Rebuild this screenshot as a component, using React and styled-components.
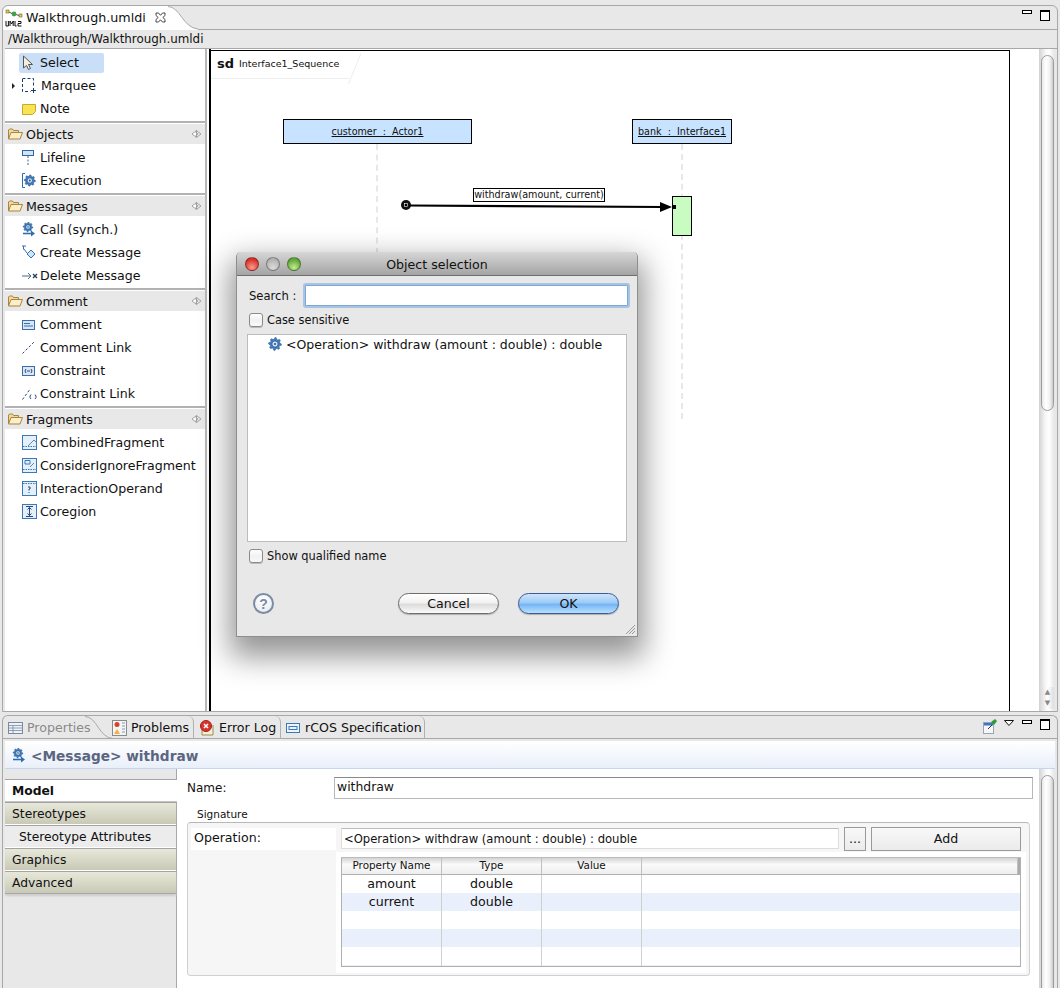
import React from "react";
import styled, { createGlobalStyle } from "styled-components";

const Global = createGlobalStyle`
  html, body { margin: 0; padding: 0; background: #e8e8e8; }
  body { font-family: "DejaVu Sans", "Liberation Sans", sans-serif; color: #111; }
  * { box-sizing: border-box; }
`;

const Page = styled.div`
  position: relative; width: 1060px; height: 988px; overflow: hidden;
  background: #e8e8e8; display: flex; flex-direction: column; padding: 5px 2px 0;
  font-size: 12.6px;
`;
const EditorPane = styled.section`
  height: 707px; border: 1px solid #a8a8a8; border-top-left-radius: 6px; border-top-right-radius: 6px;
  background: #e8e8e8; display: flex; flex-direction: column;
`;
const TabStrip = styled.div`
  height: 24px; flex: none; display: flex; justify-content: space-between; align-items: flex-start;
  border-bottom: 1px solid #a8a8a8;
`;
const EditorTab = styled.div`
  position: relative; height: 24px; width: 165px; display: flex; align-items: center; gap: 3px;
  padding: 0 0 1px 2px; font-size: 12.7px; background: #fff; border-top-left-radius: 6px; margin-bottom: -1px; white-space: nowrap;
  > svg:first-child { flex: none; }
`;
const TabCurve = styled.svg`
  position: absolute; left: 165px; top: 0;
`;
const CloseSlot = styled.span`
  display: flex; flex: none; margin-left: 6px;
`;
const WinBtns = styled.div`
  display: flex; align-items: flex-start; padding: 4px 7px 0 0;
`;
const Min = styled.span`
  display: block; width: 10px; height: 4px; border: 1px solid #000; margin: ${p => p.$mt ?? 0}px 8px 0 0; background: #fff;
`;
const Max = styled.span`
  display: block; width: 10px; height: 11px; border: 1px solid #000; border-top-width: 2px; background: #fff;
`;
const Crumb = styled.div`
  height: 18px; flex: none; margin: 1px 0 0 2px; padding-left: 3px; line-height: 17px; font-size: 11.9px;
  background: #e8e8e8; border-bottom: 1px solid #a8a8a8;
`;
const EditorBody = styled.div`
  flex: 1; min-height: 0; display: flex; background: #fff; margin-left: 2px; margin-right: 2px;
`;
const Palette = styled.nav`
  width: 200px; flex: none; background: #fff; padding-top: 2px;
`;
const ToolRow = styled.div`
  height: 23px; display: flex; align-items: center; padding-left: 14px; position: relative;
`;
const ToolChip = styled.div`
  height: 20px; display: flex; align-items: center; padding-left: 3px; border-radius: 2px;
  width: ${p => (p.$selected ? "85px" : "auto")};
  background: ${p => (p.$selected ? "#c9dff8" : "transparent")};
`;
const IconSlot = styled.span`
  width: ${p => p.$w || 18}px; height: 16px; flex: none; display: flex; align-items: center; svg { display: block; }
`;
const Expander = styled.span`
  position: absolute; left: 7px; top: 9px; width: 0; height: 0;
  border-left: 3px solid #222; border-top: 3px solid transparent; border-bottom: 3px solid transparent;
`;
const Section = styled.div`
  border-top: 2px solid #b2b2b2; margin-top: 1px;
`;
const SectionHead = styled.div`
  height: 20px; margin: 1px 0 2px; padding: 0 3px 0 3px; background: #e8e8e8; display: flex; align-items: center; gap: 3px;
`;
const SectionTitle = styled.span` flex: 1; `;
const Sash = styled.div`
  width: 4px; flex: none; background: #fff; border-left: 2px solid #b8b8b8;
`;
const Canvas = styled.div`
  position: relative; flex: 1; background: #fff; border-left: 2px solid #000;
`;
const CanvasPage = styled.div`
  position: absolute; left: 0; top: 0; width: 799px; bottom: 0; border-top: 1px solid #000; border-right: 1px solid #000; margin-top: 1px;
`;
const FrameTab = styled.div`
  position: absolute; left: 0; top: 0; width: 138px; height: 28px; display: flex; align-items: center; gap: 5px;
  padding: 0 0 3px 6px; border-bottom: 1px solid #eee;
  &::after { content: ""; position: absolute; right: 0; top: 0; height: 33px; border-right: 1px solid #eee; transform: rotate(22deg); transform-origin: bottom; }
`;
const FrameKind = styled.b` font-size: 13px; font-weight: 700; `;
const FrameName = styled.span` font-size: 9.5px; `;
const Lifeline = styled.div`
  position: absolute; left: ${p => p.$x}px; top: ${p => p.$y}px; width: ${p => p.$w}px; height: 25px;
  background: #c8e3ff; border: 1px solid #000; display: flex; align-items: center; justify-content: center;
  font-size: 9.6px; text-decoration: underline; white-space: pre; padding-bottom: 1px;
`;
const Dash = styled.div`
  position: absolute; left: ${p => p.$x}px; top: ${p => p.$y}px; height: ${p => p.$h}px; width: 0;
  border-left: 2px dashed #e8e8e8;
`;
const Activation = styled.div`
  position: absolute; left: 461px; top: 145px; width: 20px; height: 40px; background: #c8fcc0; border: 1px solid #000;
`;
const MsgLabel = styled.div`
  position: absolute; left: 262px; top: 137px; width: 132px; height: 14px; background: #fff; border: 1px solid #000;
  font-size: 9.65px; line-height: 12px; text-align: center; white-space: nowrap;
`;
const ArrowSvg = styled.svg`
  position: absolute; left: 186px; top: 140px; overflow: visible;
`;
const Scroll = styled.div`
  width: 16px; flex: none; background: linear-gradient(90deg,#d8d8d8,#f6f6f6 35%,#fff 60%,#e4e4e4); position: relative;
  display: flex; flex-direction: column; align-items: center; border-left: 1px solid #d4d4d4;
`;
const Thumb = styled.div`
  position: absolute; left: 1px; top: ${p => p.$top}px; ${p => p.$h ? `height:${p.$h}px;` : "bottom:-10px;"} width: 13px; border: 1px solid #9c9c9c;
  border-radius: 7px; background: linear-gradient(90deg,#e8e8e8,#fff 35%,#f2f2f2 70%,#ccc);
`;
const ScrollArrows = styled.div`
  position: absolute; left: 1px; bottom: 2px; width: 13px; color: #888; font-size: 7px; line-height: 11px; text-align: center;
  background: linear-gradient(90deg,#ddd,#fff,#ddd);
`;

const BottomPane = styled.section`
  margin-top: 3px; flex: 1; border: 1px solid #a8a8a8; border-bottom: 0; border-top-left-radius: 6px; border-top-right-radius: 6px;
  display: flex; flex-direction: column; background: #e8e8e8;
`;
const BottomTabs = styled.div`
  height: 23px; flex: none; display: flex; align-items: stretch; justify-content: space-between; border-bottom: 1px solid #a8a8a8;
`;
const ViewTabs = styled.div` display: flex; `;
const ViewTab = styled.div`
  position: relative; display: flex; align-items: center; gap: 4px; height: 23px; font-size: 12.6px; padding-left: ${p => p.$pl}px; width: ${p => p.$w}px;
  color: ${p => (p.$active ? "#8a8a8a" : "#111")};
  border-right: ${p => (p.$active ? "0" : "1px solid #b0b0b0")};
  border-top-right-radius: 6px; white-space: nowrap;
`;
const ActiveCurve = styled.svg` position: absolute; left: 82px; top: 0; `;
const TabLabel = styled.span` margin-left: ${p => p.$ml || 0}px; `;
const ViewTools = styled.div` display: flex; align-items: flex-start; padding: 3px 7px 0 0; `;
const MenuSlot = styled.span` display: block; margin: 1px 8px 0 7px; svg { display: block; } `;
const HeaderBar = styled.div`
  height: 28px; flex: none; margin: 2px 2px 0 2px; display: flex; align-items: center; gap: 5px; padding: 2px 0 0 7px;
  background: linear-gradient(#fff, #e9effa); border-bottom: 1px solid #c6d6f2;
  font-size: 13.7px; font-weight: 700; color: #5a6680;
`;
const PropsBody = styled.div`
  flex: 1; min-height: 0; display: flex; margin: 0 2px; background: #fff;
`;
const SideTabs = styled.div`
  width: 172px; flex: none; background: #e8e8e8; border-right: 1px solid #a8a8a8; padding-top: 10px;
`;
const SideTab = styled.div`
  height: 23px; line-height: 22px; padding-left: ${p => (p.$sub ? 14 : 7)}px; font-size: 12.3px;
  font-weight: ${p => (p.$on ? 700 : 400)};
  background: ${p => (p.$on ? "#fff" : p.$sub ? "#ececec" : "linear-gradient(#e8e8da,#c9c9b6)")};
  border-top: 1px solid #a4a4a4; border-bottom: 1px solid ${p => (p.$on ? "#c4c4c4" : "#fff")};
  margin-right: ${p => (p.$on ? "-1px" : "0")};
  &:last-child { box-shadow: 0 2px 2px #ccc; border-bottom: 1px solid #a8a8a8; }
`;
const PropsMain = styled.div`
  flex: 1; padding: 8px 0 0 10px; min-width: 0;
`;
const NameRow = styled.div`
  display: grid; grid-template-columns: 147px 699px; align-items: center; height: 22px;
`;
const Label = styled.label` font-size: 12px; `;
const TextField = styled.div`
  height: 22px; border: 1px solid #b8b8b8; border-top-color: #8a8a8a; background: #fff; padding-left: 2px; font-size: 12.4px; line-height: 17px;
`;
const SigTitle = styled.div` font-size: 10.5px; margin: 9px 0 0 10px; height: 13px; line-height: 13px; `;
const Group = styled.div`
  margin-top: 1px; width: 843px; height: 154px; border: 1px solid #d0d0d0; border-top-color: #b8b8b8; border-radius: 4px; background: #f6f6f6;
  display: grid; grid-template-columns: 145px 690px; grid-template-rows: 25px 121px; padding: 4px 0 0 3px;
`;
const OpCell = styled.div`
  background: #fff; height: 22px; padding-left: 3px; margin-top: 1px; font-size: 12.6px; line-height: 20px;
`;
const OpControls = styled.div`
  display: flex; gap: 5px; align-items: flex-start; padding-left: 5px;
`;
const OpField = styled.div`
  width: 498px; height: 21px; margin-top: 1px; background: #fff; border: 1px solid #ddd; border-top-color: #bbb; font-size: 11.6px; line-height: 20px; padding-left: 2px; white-space: nowrap;
`;
const FlatBtn = styled.div`
  width: ${p => p.$w}px; height: 24px; border: 1px solid #9a9a9a; background: linear-gradient(#f8f8f8,#ebebeb); font-size: 12.6px;
  display: flex; align-items: center; justify-content: center; padding-bottom: 1px;
`;
const TableWrap = styled.div`
  grid-column: 2; background: #fff; padding: 5px;
`;
const Table = styled.div`
  width: 680px; height: 110px; border: 1px solid #b0b0b0; border-top-color: #bbb; overflow: hidden;
`;
const THead = styled.div`
  display: grid; grid-template-columns: 100px 100px 100px 1fr; height: 17px; background: linear-gradient(#d4d4d4,#fafafa 40%,#eee); border-bottom: 1px solid #b0b0b0;
  border-right: 2px solid #aaa;
`;
const TH = styled.div` font-size: 10.4px; line-height: 15px; text-align: center; border-right: 1px solid #c0c0c0; `;
const TR = styled.div`
  display: grid; grid-template-columns: 100px 100px 100px 1fr; height: 18px; background: ${p => (p.$alt ? "#eaf0fb" : "#fff")};
`;
const TD = styled.div` font-size: 12.6px; line-height: 18px; text-align: center; border-right: 1px solid #d0d0d0; &:last-child{border-right:0;} `;

/* dialog */
const Dialog = styled.div`
  position: absolute; left: 236px; top: 252px; width: 402px; height: 385px; background: #e8e8e8; border: 1px solid #8e8e8e; border-top: 0;
  border-radius: 5px 5px 0 0; box-shadow: 0 14px 30px 6px rgba(0,0,0,.42); display: flex; flex-direction: column;
`;
const TitleBar = styled.div`
  height: 24px; flex: none; position: relative; display: flex; align-items: center; justify-content: center; padding-top: 1px; border-bottom: 1px solid #6e6e6e;
  background: linear-gradient(#d6d6d6,#a4a4a4); border-radius: 5px 5px 0 0; font-size: 12.6px;
`;
const Lights = styled.div` position: absolute; left: 8px; top: 5px; display: flex; gap: 7px; `;
const Light = styled.span`
  width: 14px; height: 14px; border-radius: 50%; border: 1px solid rgba(0,0,0,.35); background: radial-gradient(circle at 50% 80%, ${p => p.$c2}, ${p => p.$c1} 70%);
`;
const DlgBody = styled.div` flex: 1; padding: 9px 10px 0 10px; display: flex; flex-direction: column; position: relative; `;
const SearchRow = styled.div` display: flex; align-items: center; padding-left: 2px; height: 21px; font-size: 11.6px; `;
const SearchLabel = styled.span` width: 56px; flex: none; white-space: nowrap; `;
const SearchInput = styled.div`
  flex: none; width: 323px; height: 21px; background: #fff; border: 1px solid #7fa6cf; box-shadow: 0 0 0 2px #a6c5e6; border-radius: 1px;
`;
const CheckRow = styled.div` display: flex; align-items: center; gap: 4px; padding-left: 2px; height: 16px; margin-top: ${p => p.$mt}px; font-size: 11.4px; `;
const Box = styled.span`
  width: 14px; height: 14px; border: 1px solid #8a8a8a; border-radius: 3px; background: linear-gradient(#fff,#f1f1f1 50%,#fafafa); box-shadow: 0 1px 0 #bbb;
`;
const ListBox = styled.div`
  margin-top: 6px; width: 380px; height: 208px; background: #fff; border: 1px solid #bcbcbc; padding-left: 20px;
`;
const ListItem = styled.div` display: flex; align-items: center; gap: 4px; height: 18px; font-size: 12.5px; white-space: nowrap; `;
const DlgFooter = styled.div` display: flex; align-items: center; margin-top: 29px; padding-left: 6px; `;
const Help = styled.span`
  width: 21px; height: 21px; border-radius: 50%; border: 2px solid #7c8aa4; color: #7c8aa4; display: flex; align-items: center; justify-content: center;
  font: 700 14px "Liberation Sans", sans-serif; background: radial-gradient(circle at 50% 30%, #fff, #e4e8f0);
`;
const AquaBtn = styled.div`
  width: 101px; height: 21px; border-radius: 11px; display: flex; align-items: center; justify-content: center; font-size: 12.6px; margin-left: ${p => p.$ml}px;
  border: 1px solid ${p => (p.$primary ? "#3d5a94" : "#6e6e6e")};
  background: ${p => (p.$primary ? "linear-gradient(#cfe4fb,#9ccbf7 45%,#76b6f5 55%,#b8e0fc)" : "linear-gradient(#fff,#f2f2f2 45%,#dcdcdc 55%,#fbfbfb)")};
  box-shadow: 0 1px 1px rgba(0,0,0,.25);
`;
const Grip = styled.svg` position: absolute; right: 1px; bottom: 1px; `;

/* icons */
const gearPath = (r, teeth = 8) => {
  const pts = [];
  for (let i = 0; i < teeth * 4; i++) {
    const a = (i / (teeth * 4)) * Math.PI * 2;
    const rr = i % 4 < 2 ? r : r * 0.76;
    pts.push(`${(Math.cos(a) * rr).toFixed(2)} ${(Math.sin(a) * rr).toFixed(2)}`);
  }
  return "M" + pts.join("L") + "Z";
};
const Gear = ({ x = 0, y = 0, r = 5 }) => (
  <g transform={`translate(${x} ${y})`}>
    <path d={gearPath(r)} fill="#3f7fc0" stroke="#1f4f86" strokeWidth=".5" />
    <circle r={r * 0.48} fill="#cfe2f5" stroke="#1f4f86" strokeWidth=".7" />
    <circle r={r * 0.16} fill="#1f4f86" />
  </g>
);
const Cursor = () => <svg width="11" height="16" viewBox="0 0 11 16"><path d="M1.5 1v12l3-2.5 2 4 2-1-2-4h4z" fill="#f3f0dc" stroke="#555" strokeWidth="1"/></svg>;
const MarqueeI = () => <svg width="14" height="15" viewBox="0 0 14 15"><path d="M.5 1v12.5h8M.5 .5h11v7" fill="none" stroke="#1a3a6a" strokeDasharray="3 2"/><path d="M11.5 10v5M9 12.5h5" stroke="#1a3a6a"/></svg>;
const NoteI = () => <svg width="14" height="12" viewBox="0 0 14 12"><path d="M.5 1.5h13v7l-3 3H.5z" fill="#f8e354" stroke="#c8a832"/></svg>;
const Folder = () => <svg width="15" height="12" viewBox="0 0 15 12"><path d="M.5 11V2l1-1h3l1 1.5h5v2" fill="#f0d9a0" stroke="#a8843c"/><path d="M.5 11l2.500-6.500h11.500L12 11z" fill="#fbeec8" stroke="#a8843c"/></svg>;
const Collapse = () => <svg width="11" height="8" viewBox="0 0 11 8"><path d="M5.5 .5L1 4l4.500 3.500z" fill="#fff" stroke="#999" strokeWidth=".9"/><path d="M5.500 .5L10 4 5.500 7.500" fill="none" stroke="#999" strokeWidth=".9"/><path d="M4 1.500L7 4 4 6.500" fill="none" stroke="#999" strokeWidth=".8"/></svg>;
const LifelineI = () => <svg width="12" height="15" viewBox="0 0 12 15"><rect x=".5" y=".5" width="11" height="5" fill="#cfe4f8" stroke="#34689c"/><path d="M6 6v9" stroke="#34689c" strokeDasharray="2 1.5"/></svg>;
const ExecI = () => <svg width="14" height="15" viewBox="0 0 14 15"><path d="M3 .5H.5v14H3" fill="none" stroke="#2f6db0"/><Gear x={7.8} y={7.5} r={5.6}/></svg>;
const CallI = () => <svg width="14" height="15" viewBox="0 0 14 15"><Gear x={6} y={5} r={4.8}/><path d="M1 11.500h9" stroke="#2f6db0" strokeWidth="1.600"/><path d="M9 8.500l4 3-4 3z" fill="#2f6db0"/></svg>;
const CreateI = () => <svg width="14" height="15" viewBox="0 0 14 15"><path d="M1.500 1v3.500M0 1h4" stroke="#3a6ea8"/><path d="M9 5l4 4-4 4-4-4z" fill="#cfe4f8" stroke="#3a6ea8"/><path d="M2 4l3 4" stroke="#3a6ea8"/></svg>;
const DeleteI = () => <svg width="16" height="10" viewBox="0 0 16 10"><path d="M0 5h9M6 2l3 3-3 3" fill="none" stroke="#4a6a90"/><path d="M11 3l4 4M15 3l-4 4" stroke="#223a5a" strokeWidth="1.200"/></svg>;
const CommentI = () => <svg width="13" height="10" viewBox="0 0 13 10"><rect x=".5" y=".5" width="12" height="9" fill="#d8e6f5" stroke="#3a6ea8"/><path d="M2 3.500h6M2 6h9" stroke="#3a6ea8"/></svg>;
const LinkI = () => <svg width="13" height="13" viewBox="0 0 13 13"><path d="M.5 12.500l12-12" stroke="#26487a" strokeDasharray="2.500 2"/></svg>;
const ConstraintI = () => <svg width="13" height="10" viewBox="0 0 13 10"><rect x=".5" y=".5" width="12" height="9" fill="#d8e6f5" stroke="#3a6ea8"/><path d="M4 3L3 5l1 2M9 3l1 2-1 2M5 5h3" fill="none" stroke="#26487a"/></svg>;
const CLinkI = () => <svg width="15" height="13" viewBox="0 0 15 13"><path d="M.5 12.500l8-11" stroke="#26487a" strokeDasharray="2.500 2"/><path d="M9 7.500L8 9v1.500L9 12M13 7.500L14 9v1.500L13 12" fill="none" stroke="#26487a"/></svg>;
const FragI = ({ kind }) => (
  <svg width="15" height="15" viewBox="0 0 15 15">
    <rect x=".5" y=".5" width="14" height="14" fill="#e4effa" stroke="#3a78b8"/>
    {kind === "comb" && <><path d="M1 11.500h13" stroke="#3a78b8" strokeDasharray="1.500 1"/><path d="M6 11l6-6 2 2" fill="none" stroke="#5a8ab8"/></>}
    {kind === "cons" && <><path d="M3 2.500h5v3.500H3z" fill="none" stroke="#3a78b8"/><path d="M1 11.500h13" stroke="#3a78b8" strokeDasharray="1.500 1"/><path d="M8 9l4-4" stroke="#5a8ab8"/></>}
    {kind === "op" && <><path d="M1 2.500h13" stroke="#3a78b8" strokeDasharray="1.500 1"/><path d="M6 6h2v2H7v1.500M7 11v1" fill="none" stroke="#26487a"/></>}
    {kind === "core" && <><path d="M4 2.500h7M4 12.500h7M7.500 3.500v8M5.500 5.500l2-2 2 2M5.500 9.500l2 2 2-2" fill="none" stroke="#26487a"/></>}
  </svg>
);
const UmlI = () => <svg width="18" height="20" viewBox="0 0 18 20"><rect x="1" y="2" width="3" height="3" fill="#e9c94a" stroke="#6a6a30" strokeWidth=".6"/><rect x="14" y="6" width="3" height="3" fill="#e9c94a" stroke="#6a6a30" strokeWidth=".6"/><circle cx="9" cy="6" r="2.400" fill="#3fa24a"/><path d="M4 4l3 1.500M11 6.500l3 1" stroke="#555"/><path d="M1 13v5h2.400v-5M5 18v-5l1.600 3 1.600-3v5M10 13v5h1.600M13 13.500h3v2h-3v2.500h3.500" fill="none" stroke="#111"/></svg>;
const CloseX = () => <svg width="11" height="11" viewBox="0 0 11 11"><path d="M1 1h2.500l2 2.300 2-2.300H10v2.500L7.800 5.500 10 7.500V10H7.500l-2-2.200-2 2.200H1V7.500l2.200-2L1 3.500z" fill="#fff" stroke="#333" strokeWidth=".9"/></svg>;
const PropsI = () => <svg width="15" height="12" viewBox="0 0 15 12"><rect x=".5" y=".5" width="14" height="11" fill="#eef2f8" stroke="#7a8aa0"/><path d="M.5 3.500h14M.5 6h14M.5 8.500h14M5 3.500v8" stroke="#7a8aa0" strokeWidth=".8"/></svg>;
const ProblemsI = () => <svg width="15" height="16" viewBox="0 0 15 16"><rect x=".5" y=".5" width="14" height="15" fill="#f4f4f4" stroke="#8a8a8a"/><circle cx="5" cy="4.500" r="2.500" fill="#d8402c"/><path d="M5 9l3 5H2z" fill="#f0b23c"/><path d="M10 3h3M10 6h3M10 9h3M10 12h3" stroke="#7a9ac8"/></svg>;
const ErrI = () => <svg width="16" height="16" viewBox="0 0 16 16"><path d="M3 9v6h11V5" fill="#f6efd4" stroke="#9a8a50"/><circle cx="7" cy="6" r="5.500" fill="#d8342c" stroke="#a02020"/><path d="M5 4l4 4M9 4l-4 4" stroke="#fff" strokeWidth="1.500"/></svg>;
const RcosI = () => <svg width="14" height="10" viewBox="0 0 14 10"><rect x=".5" y=".5" width="13" height="9" fill="#eef4fb" stroke="#3a78b8"/><rect x="3" y="3.500" width="8" height="3" fill="none" stroke="#3a78b8"/></svg>;
const PinI = () => <svg width="14" height="15" viewBox="0 0 14 15"><rect x=".5" y="3.500" width="10" height="11" fill="#f4f6f8" stroke="#9aa4b0"/><rect x="1" y="4" width="9" height="2.500" fill="#3a78c8"/><path d="M5 10l4-4" stroke="#333"/><path d="M8 3l4-3 2 2-3 4z" fill="#2f9a3a"/></svg>;
const MenuTri = () => <svg width="10" height="6" viewBox="0 0 10 6"><path d="M.5.500h9L5 5.500z" fill="#fff" stroke="#111"/></svg>;

const Tool = ({ icon, w, children, selected, exp }) => (
  <ToolRow>
    {exp && <Expander />}
    <ToolChip $selected={selected}>
      <IconSlot $w={w}>{icon}</IconSlot>
      {children}
    </ToolChip>
  </ToolRow>
);
const ToolGroup = ({ title, items }) => (
  <Section>
    <SectionHead><Folder /><SectionTitle>{title}</SectionTitle><Collapse /></SectionHead>
    {items.map(([label, icon]) => <Tool key={label} icon={icon}>{label}</Tool>)}
  </Section>
);

export default function App() {
  return (
    <Page>
      <Global />
      <EditorPane>
        <TabStrip>
          <EditorTab>
            <UmlI />Walkthrough.umldi<CloseSlot><CloseX /></CloseSlot>
            <TabCurve width="30" height="24" viewBox="0 0 30 24"><path d="M0 0C12 0 15 22 30 23V24H0z" fill="#fff"/><path d="M0 .5C12 .5 15 22 30 23" fill="none" stroke="#a8a8a8"/></TabCurve>
          </EditorTab>
          <WinBtns><Min /><Max /></WinBtns>
        </TabStrip>
        <Crumb>/Walkthrough/Walkthrough.umldi</Crumb>
        <EditorBody>
          <Palette>
            <Tool selected icon={<Cursor />}>Select</Tool>
            <Tool exp w={19} icon={<MarqueeI />}>Marquee</Tool>
            <Tool icon={<NoteI />}>Note</Tool>
            <ToolGroup title="Objects" items={[["Lifeline", <LifelineI />], ["Execution", <ExecI />]]} />
            <ToolGroup title="Messages" items={[["Call (synch.)", <CallI />], ["Create Message", <CreateI />], ["Delete Message", <DeleteI />]]} />
            <ToolGroup title="Comment" items={[["Comment", <CommentI />], ["Comment Link", <LinkI />], ["Constraint", <ConstraintI />], ["Constraint Link", <CLinkI />]]} />
            <ToolGroup title="Fragments" items={[["CombinedFragment", <FragI kind="comb" />], ["ConsiderIgnoreFragment", <FragI kind="cons" />], ["InteractionOperand", <FragI kind="op" />], ["Coregion", <FragI kind="core" />]]} />
          </Palette>
          <Sash />
          <Canvas>
            <CanvasPage>
              <FrameTab><FrameKind>sd</FrameKind><FrameName>Interface1_Sequence</FrameName></FrameTab>
              <Lifeline $x={72} $y={68} $w={189}>{"customer  :  Actor1"}</Lifeline>
              <Lifeline $x={421} $y={68} $w={100}>{"bank  :  Interface1"}</Lifeline>
              <Dash $x={165} $y={93} $h={110} />
              <Dash $x={470} $y={93} $h={275} />
              <MsgLabel>withdraw(amount, current)</MsgLabel>
              <Activation />
              <ArrowSvg width="290" height="20" viewBox="0 0 290 20">
                <circle cx="9" cy="14" r="5" fill="#111" />
                <rect x="7.500" y="12.500" width="3" height="3" fill="#000" stroke="#fff" strokeWidth=".6" />
                <path d="M12 14.500L266 16" stroke="#000" strokeWidth="2.200" />
                <path d="M263 11l12 5-12 5z" fill="#000" />
                <rect x="275" y="14" width="4" height="4" fill="#000" />
              </ArrowSvg>
            </CanvasPage>
          </Canvas>
          <Scroll>
            <Thumb $top={6} $h={356} />
            <ScrollArrows>▲<br />▼</ScrollArrows>
          </Scroll>
        </EditorBody>
      </EditorPane>

      <BottomPane>
        <BottomTabs>
          <ViewTabs>
            <ViewTab $active $pl={5} $w={108}>
              <PropsI />Properties
              <ActiveCurve width="28" height="23" viewBox="0 0 28 23"><path d="M0 .5C12 .5 14 22 28 22.500" fill="none" stroke="#a8a8a8"/></ActiveCurve>
            </ViewTab>
            <ViewTab $pl={1} $w={83}><ProblemsI />Problems</ViewTab>
            <ViewTab $pl={5} $w={87}><ErrI />Error Log</ViewTab>
            <ViewTab $pl={5} $w={144}><RcosI /><TabLabel $ml={1}>rCOS Specification</TabLabel></ViewTab>
          </ViewTabs>
          <ViewTools>
            <PinI /><MenuSlot><MenuTri /></MenuSlot><Min $mt={1} /><Max />
          </ViewTools>
        </BottomTabs>
        <HeaderBar><CallI /><span>&lt;Message&gt; withdraw</span></HeaderBar>
        <PropsBody>
          <SideTabs>
            <SideTab $on>Model</SideTab>
            <SideTab>Stereotypes</SideTab>
            <SideTab $sub>Stereotype Attributes</SideTab>
            <SideTab>Graphics</SideTab>
            <SideTab>Advanced</SideTab>
          </SideTabs>
          <PropsMain>
            <NameRow><Label>Name:</Label><TextField>withdraw</TextField></NameRow>
            <SigTitle>Signature</SigTitle>
            <Group>
              <OpCell>Operation:</OpCell>
              <OpControls>
                <OpField>&lt;Operation&gt; withdraw (amount : double) : double</OpField>
                <FlatBtn $w={22}>...</FlatBtn>
                <FlatBtn $w={150}>Add</FlatBtn>
              </OpControls>
              <TableWrap>
                <Table>
                  <THead><TH>Property Name</TH><TH>Type</TH><TH>Value</TH><TH /></THead>
                  <TR><TD>amount</TD><TD>double</TD><TD /><TD /></TR>
                  <TR $alt><TD>current</TD><TD>double</TD><TD /><TD /></TR>
                  <TR><TD /><TD /><TD /><TD /></TR>
                  <TR $alt><TD /><TD /><TD /><TD /></TR>
                  <TR><TD /><TD /><TD /><TD /></TR>
                  <TR $alt><TD /><TD /><TD /><TD /></TR>
                </Table>
              </TableWrap>
            </Group>
          </PropsMain>
          <Scroll>
            <Thumb $top={6} />
          </Scroll>
        </PropsBody>
      </BottomPane>

      <Dialog>
        <TitleBar>
          <Lights>
            <Light $c1="#d8342c" $c2="#ff9a90" />
            <Light $c1="#b4b4b4" $c2="#dcdcdc" />
            <Light $c1="#62a83a" $c2="#c4ec90" />
          </Lights>
          Object selection
        </TitleBar>
        <DlgBody>
          <SearchRow><SearchLabel>Search :</SearchLabel><SearchInput /></SearchRow>
          <CheckRow $mt={6}><Box />Case sensitive</CheckRow>
          <ListBox><ListItem><svg width="14" height="14" viewBox="0 0 14 14"><Gear x={7} y={7} r={6.400} /></svg>&lt;Operation&gt; withdraw (amount : double) : double</ListItem></ListBox>
          <CheckRow $mt={6}><Box />Show qualified name</CheckRow>
          <DlgFooter>
            <Help>?</Help>
            <AquaBtn $ml={124}>Cancel</AquaBtn>
            <AquaBtn $primary $ml={19}>OK</AquaBtn>
          </DlgFooter>
          <Grip width="11" height="11" viewBox="0 0 11 11"><path d="M1 10l9-9M4 10l6-6M7 10l3-3" stroke="#999" /></Grip>
        </DlgBody>
      </Dialog>
    </Page>
  );
}
